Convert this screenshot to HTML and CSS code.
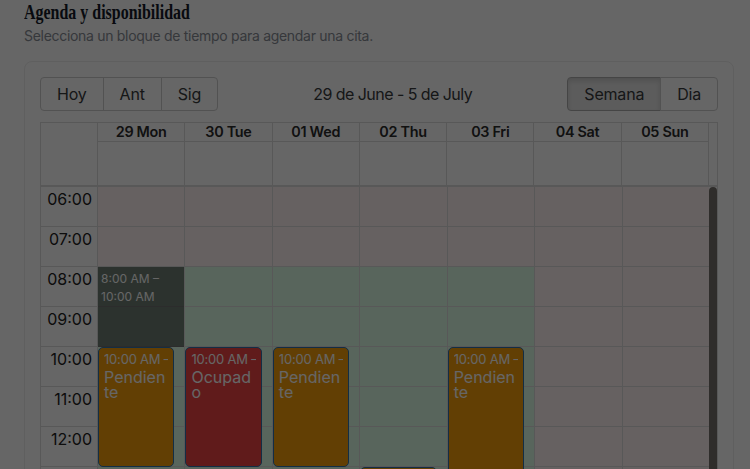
FILE: index.html
```html
<!DOCTYPE html>
<html lang="es">
<head>
<meta charset="utf-8">
<title>Agenda y disponibilidad</title>
<link rel="stylesheet" href="styles.css">
</head>
<body>
<div class="page">
  <h1 class="title"><span>Agenda y disponibilidad</span></h1>
  <p class="subtitle">Selecciona un bloque de tiempo para agendar una cita.</p>
  <div class="card">
    <div class="toolbar">
      <div class="btn-group">
        <button type="button">Hoy</button><button type="button">Ant</button><button type="button">Sig</button>
      </div>
      <span class="toolbar-label">29 de June - 5 de July</span>
      <div class="btn-group">
        <button type="button" class="active">Semana</button><button type="button">Dia</button>
      </div>
    </div>
    <div class="calendar">
      <div class="time-header">
        <div class="header-gutter"></div>
        <div class="header-content">
          <div class="header-row">
            <div class="day-header">29 Mon</div>
            <div class="day-header">30 Tue</div>
            <div class="day-header">01 Wed</div>
            <div class="day-header">02 Thu</div>
            <div class="day-header">03 Fri</div>
            <div class="day-header">04 Sat</div>
            <div class="day-header">05 Sun</div>
          </div>
          <div class="allday-row">
            <div class="allday-cell"></div><div class="allday-cell"></div><div class="allday-cell"></div><div class="allday-cell"></div><div class="allday-cell"></div><div class="allday-cell"></div><div class="allday-cell"></div>
          </div>
        </div>
      </div>
      <div class="time-content">
        <div class="time-grid">
          <div class="gutter">
            <div class="label">06:00</div><div class="label">07:00</div><div class="label">08:00</div><div class="label">09:00</div><div class="label">10:00</div><div class="label">11:00</div><div class="label">12:00</div><div class="label">13:00</div><div class="label">14:00</div><div class="label">15:00</div><div class="label">16:00</div><div class="label">17:00</div>
          </div>
          <div class="day-col">
            <div class="slot"></div><div class="slot"></div><div class="slot open"></div><div class="slot open"></div><div class="slot open"></div><div class="slot open"></div><div class="slot open"></div><div class="slot open"></div><div class="slot open"></div><div class="slot open"></div><div class="slot open"></div><div class="slot open"></div>
            <div class="events">
              <div class="event pending" style="top:160px;height:120px"><div class="event-label">10:00 AM – 1:00 PM</div><div class="event-title">Pendiente</div></div>
            </div>
            <div class="selection" style="top:80px;height:80px">8:00 AM – 10:00 AM</div>
          </div>
          <div class="day-col">
            <div class="slot"></div><div class="slot"></div><div class="slot open"></div><div class="slot open"></div><div class="slot open"></div><div class="slot open"></div><div class="slot open"></div><div class="slot open"></div><div class="slot open"></div><div class="slot open"></div><div class="slot open"></div><div class="slot open"></div>
            <div class="events">
              <div class="event busy" style="top:160px;height:120px"><div class="event-label">10:00 AM – 1:00 PM</div><div class="event-title">Ocupado</div></div>
            </div>
          </div>
          <div class="day-col">
            <div class="slot"></div><div class="slot"></div><div class="slot open"></div><div class="slot open"></div><div class="slot open"></div><div class="slot open"></div><div class="slot open"></div><div class="slot open"></div><div class="slot open"></div><div class="slot open"></div><div class="slot open"></div><div class="slot open"></div>
            <div class="events">
              <div class="event pending" style="top:160px;height:120px"><div class="event-label">10:00 AM – 1:00 PM</div><div class="event-title">Pendiente</div></div>
            </div>
          </div>
          <div class="day-col">
            <div class="slot"></div><div class="slot"></div><div class="slot open"></div><div class="slot open"></div><div class="slot open"></div><div class="slot open"></div><div class="slot open"></div><div class="slot open"></div><div class="slot open"></div><div class="slot open"></div><div class="slot open"></div><div class="slot open"></div>
            <div class="events">
              <div class="event pending" style="top:280px;height:80px"><div class="event-label">1:00 PM – 3:00 PM</div><div class="event-title">Pendiente</div></div>
            </div>
          </div>
          <div class="day-col">
            <div class="slot"></div><div class="slot"></div><div class="slot open"></div><div class="slot open"></div><div class="slot open"></div><div class="slot open"></div><div class="slot open"></div><div class="slot open"></div><div class="slot open"></div><div class="slot open"></div><div class="slot open"></div><div class="slot open"></div>
            <div class="events">
              <div class="event pending" style="top:160px;height:160px"><div class="event-label">10:00 AM – 2:00 PM</div><div class="event-title">Pendiente</div></div>
            </div>
          </div>
          <div class="day-col">
            <div class="slot"></div><div class="slot"></div><div class="slot"></div><div class="slot"></div><div class="slot"></div><div class="slot"></div><div class="slot"></div><div class="slot"></div><div class="slot"></div><div class="slot"></div><div class="slot"></div><div class="slot"></div>
          </div>
          <div class="day-col">
            <div class="slot"></div><div class="slot"></div><div class="slot"></div><div class="slot"></div><div class="slot"></div><div class="slot"></div><div class="slot"></div><div class="slot"></div><div class="slot"></div><div class="slot"></div><div class="slot"></div><div class="slot"></div>
          </div>
        </div>
        <div class="scrollbar"><div class="scroll-thumb"></div></div>
      </div>
    </div>
  </div>
</div>
<div class="backdrop"></div>
</body>
</html>
```
FILE: styles.css
```css
* { box-sizing: border-box; }

body {
  margin: 0;
  background: #ffffff;
  color: #373a3c;
  font-family: Inter, "Noto Sans", sans-serif;
}

.page {
  padding: 0 16px 24px 24px;
}

.title {
  margin: 0;
  font-family: "Liberation Serif", serif;
  font-weight: 700;
  font-size: 21px;
  line-height: 24px;
  color: #141b28;
  white-space: nowrap;
}

.title span {
  display: inline-block;
  transform: scaleX(0.76);
  transform-origin: 0 50%;
}

.subtitle {
  margin: 2px 0 15px;
  font-size: 14px;
  line-height: 20px;
  letter-spacing: -0.3px;
  color: #878c95;
}

.card {
  border: 1px solid #eeeeee;
  border-radius: 8px;
  padding: 15px;
}

.toolbar {
  display: flex;
  align-items: center;
  margin-bottom: 11px;
}

.btn-group {
  display: flex;
}

.btn-group button {
  font-family: inherit;
  font-size: 16px;
  line-height: normal;
  color: #373a3c;
  background: #ffffff;
  border: 1px solid #cccccc;
  padding: 6px 16px;
  margin: 0;
  border-radius: 0;
  letter-spacing: -0.2px;
}

.btn-group button + button {
  margin-left: -1px;
}

.btn-group button:first-child {
  border-radius: 4px 0 0 4px;
}

.btn-group button:last-child {
  border-radius: 0 4px 4px 0;
}

.btn-group button.active {
  background: #e6e6e6;
  border-color: #adadad;
  box-shadow: inset 0 3px 5px rgba(0, 0, 0, 0.125);
}

.toolbar-label {
  flex: 1;
  text-align: center;
  padding: 0 10px;
  font-size: 16px;
  letter-spacing: -0.55px;
}

.calendar {
  border: 1px solid #dddddd;
  display: flex;
  flex-direction: column;
}

.time-header {
  display: flex;
  margin-right: 8px;
  border-right: 1px solid #dddddd;
}

.header-gutter {
  width: 56px;
  flex: none;
}

.header-content {
  flex: 1;
  min-width: 0;
  display: flex;
  flex-direction: column;
}

.header-row {
  display: flex;
  border-bottom: 1px solid #dddddd;
}

.day-header {
  flex: 1;
  min-width: 0;
  border-left: 1px solid #dddddd;
  text-align: center;
  font-weight: 600;
  font-size: 14.4px;
  line-height: 18px;
  letter-spacing: -0.3px;
  padding: 0 3px;
  color: #2b2b2b;
  white-space: nowrap;
}

.allday-row {
  display: flex;
  height: 43px;
}

.allday-cell {
  flex: 1;
  min-width: 0;
  border-left: 1px solid #dddddd;
}

.time-content {
  display: flex;
  border-top: 2px solid #dddddd;
  height: 470px;
  overflow: hidden;
}

.time-grid {
  flex: 1;
  min-width: 0;
  display: flex;
  align-items: flex-start;
}

.scrollbar {
  width: 8px;
  flex: none;
  background: #ffffff;
}

.scroll-thumb {
  height: 330px;
  background: #77726c;
  border-radius: 4px;
}

.gutter {
  width: 56px;
  flex: none;
}

.gutter .label {
  height: 40px;
  border-bottom: 1px solid #dddddd;
  text-align: right;
  padding-right: 5px;
  font-size: 16px;
  line-height: 24px;
  color: #222222;
}

.day-col {
  flex: 1;
  min-width: 0;
  border-left: 1px solid #dddddd;
  position: relative;
}

.slot {
  height: 40px;
  border-bottom: 1px solid #dddddd;
  background: #fef2f2;
}

.slot.open {
  background: #dcfce7;
}

.events {
  position: absolute;
  top: 0;
  bottom: 0;
  left: 0;
  right: 10px;
}

.event {
  position: absolute;
  left: 0;
  right: 0;
  border: 1px solid #3174ad;
  border-radius: 5px;
  padding: 2px 5px;
  color: #ffffff;
  overflow: hidden;
}

.event.pending {
  background: #f59e0b;
}

.event.busy {
  background: #ef4444;
}

.event-label {
  font-size: 13px;
  line-height: 18px;
  white-space: nowrap;
  overflow: hidden;
  letter-spacing: -0.2px;
}

.event-title {
  font-size: 16px;
  line-height: 15px;
  margin-top: 2px;
  overflow-wrap: anywhere;
}

.selection {
  position: absolute;
  left: 0;
  right: 0;
  background: rgba(0, 0, 0, 0.5);
  color: #ffffff;
  font-size: 12px;
  line-height: 18px;
  padding: 3px;
}

.backdrop {
  position: fixed;
  inset: 0;
  background: rgba(0, 0, 0, 0.6);
}
```
